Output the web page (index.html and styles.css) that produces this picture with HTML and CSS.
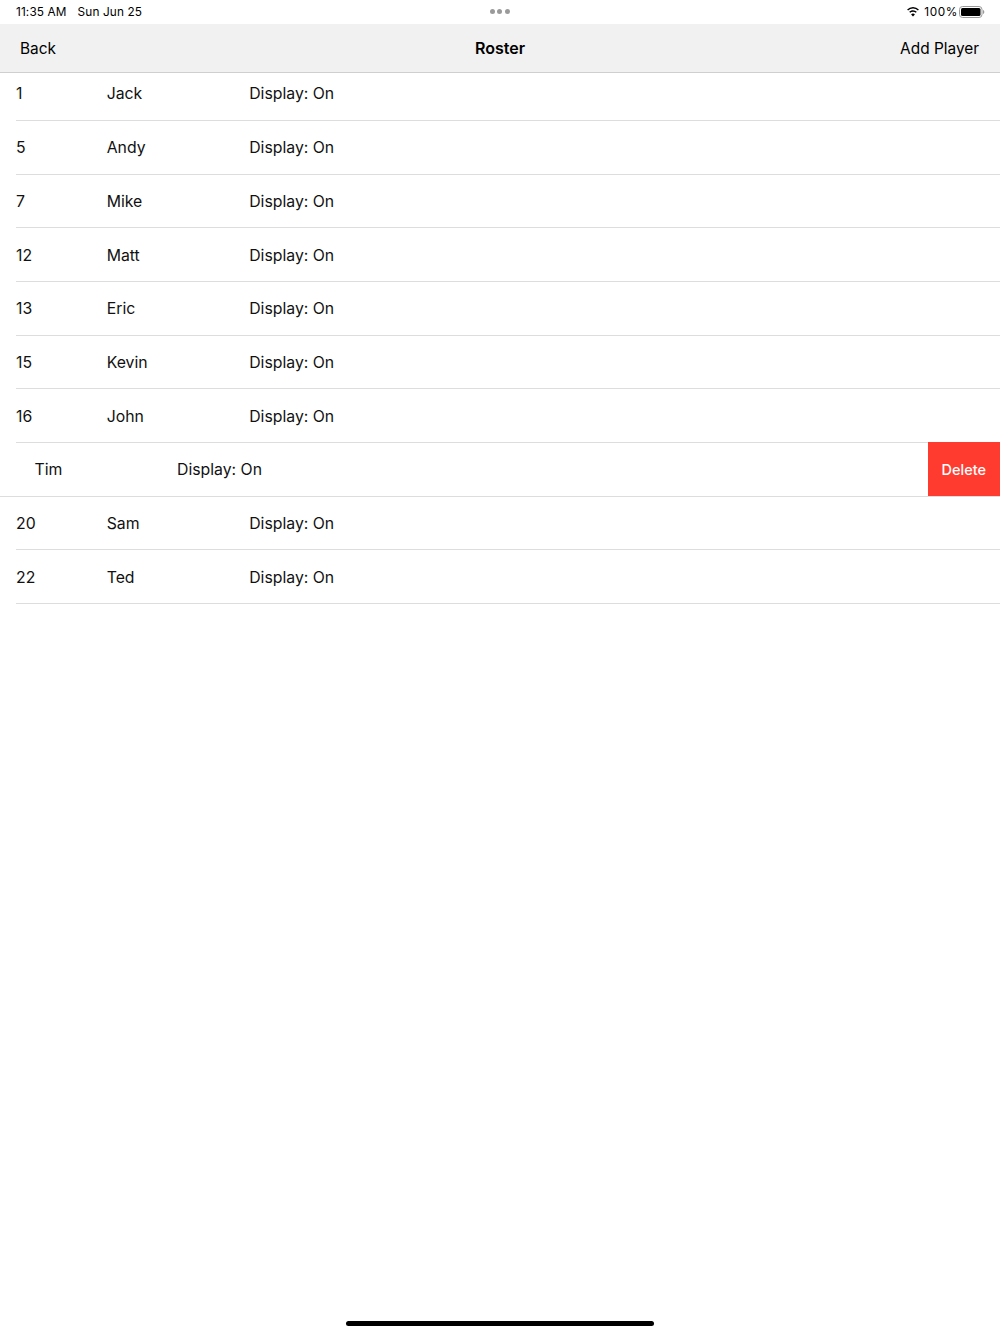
FILE: index.html
```html
<!DOCTYPE html>
<html lang="en">
<head>
<meta charset="utf-8">
<title>Roster</title>
<link rel="stylesheet" href="styles.css">
</head>
<body>
<div class="screen">
  <div class="status">
    <div class="status-left"><span>11:35 AM</span><span>Sun Jun 25</span></div>
    <div class="dots"><i></i><i></i><i></i></div>
    <div class="status-right">
      <svg class="wifi" width="14" height="11" viewBox="0 0 14 11"><path d="M7 2.6c1.9 0 3.6.7 4.9 2l1-1.1A8.4 8.4 0 0 0 7 1 8.4 8.4 0 0 0 1.100 3.500l1 1.100a7 7 0 0 1 4.900-2zM7 5.700c1.100 0 2.100.4 2.800 1.100l1-1.100A5.600 5.600 0 0 0 7 4.200c-1.500 0-2.800.6-3.800 1.500l1 1.100c.7-.7 1.700-1.100 2.800-1.100zM7 10.500l1.900-2.100A2.800 2.800 0 0 0 7 7.600c-.7 0-1.400.3-1.900.8z" fill="#000"/></svg>
      <span class="pct">100%</span>
      <svg class="battery" width="26" height="12" viewBox="0 0 26 12"><rect x="0.500" y="0.500" width="22.500" height="11" rx="3" fill="none" stroke="#999"/><rect x="2" y="2" width="19.500" height="8" rx="1.500" fill="#000"/><path d="M24 4v4c.8-.3 1.300-1.100 1.300-2S24.800 4.300 24 4z" fill="#999"/></svg>
    </div>
  </div>
  <header class="nav">
    <span class="nav-item">Back</span>
    <span class="nav-title">Roster</span>
    <span class="nav-item">Add Player</span>
  </header>
  <main class="list">
    <div class="row row-first"><span class="num">1</span><span class="name">Jack</span><span>Display: On</span></div>
    <div class="row"><span class="num">5</span><span class="name">Andy</span><span>Display: On</span></div>
    <div class="row"><span class="num">7</span><span class="name">Mike</span><span>Display: On</span></div>
    <div class="row"><span class="num">12</span><span class="name">Matt</span><span>Display: On</span></div>
    <div class="row"><span class="num">13</span><span class="name">Eric</span><span>Display: On</span></div>
    <div class="row"><span class="num">15</span><span class="name">Kevin</span><span>Display: On</span></div>
    <div class="row"><span class="num">16</span><span class="name">John</span><span>Display: On</span></div>
    <div class="row row-swiped"><span class="name-swiped">Tim</span><span>Display: On</span><span class="delete">Delete</span></div>
    <div class="row"><span class="num">20</span><span class="name">Sam</span><span>Display: On</span></div>
    <div class="row"><span class="num">22</span><span class="name">Ted</span><span>Display: On</span></div>
  </main>
  <div class="home-area"><div class="home-bar"></div></div>
</div>
</body>
</html>
```
FILE: styles.css
```css
* { box-sizing: border-box; }
html, body { margin: 0; padding: 0; background: #fff; }
body { font-family: Inter, "Liberation Sans", sans-serif; color: #000; }
.screen { width: 1000px; height: 1334px; display: flex; flex-direction: column; overflow: hidden; }
.status { height: 24px; flex: none; display: grid; grid-template-columns: 1fr auto 1fr; align-items: center; padding: 0 15px 1px 16px; font-size: 11.800px; letter-spacing: 0.130px; }
.status-left { display: flex; gap: 11px; }
.dots { display: flex; gap: 2.500px; margin-left: -2px; }
.dots i { width: 5px; height: 5px; border-radius: 50%; background: #9a9a9a; }
.status-right { display: flex; justify-content: flex-end; align-items: center; gap: 4px; }
.wifi { margin-right: 0; }
.pct { letter-spacing: 0.600px; }
.battery { margin-left: -3px; }
.nav { height: 49px; flex: none; background: #f1f1f1; border-bottom: 1px solid #cfcfcf; display: flex; justify-content: space-between; align-items: center; padding: 0 21px 0 20px; font-size: 15.400px; }
.nav-title { font-weight: 600; font-size: 16px; position: absolute; left: 0; right: 0; text-align: center; pointer-events: none; }
.list { flex: none; }
.row { height: 53.670px; margin-left: 16px; padding-top: 1px; display: flex; align-items: center; border-bottom: 1px solid #dddddd; font-size: 15.800px; color: #111; }
.row-first { height: 48px; padding: 0 0 7px; }
.num { width: 90.700px; flex: none; }
.name { width: 142.500px; flex: none; }
.row-swiped { margin-left: 0; padding-left: 34.500px; padding-top: 0; position: relative; }
.name-swiped { width: 142.500px; flex: none; }
.delete { position: absolute; top: -1px; bottom: 0; right: 0; width: 72.500px; padding-top: 1px; background: #ff3b30; color: #fff; font-size: 14.500px; font-weight: 500; display: flex; align-items: center; justify-content: center; }
.home-area { margin-top: auto; height: 13px; flex: none; }
.home-bar { width: 308px; height: 5px; margin: 0 auto; background: #000; border-radius: 3px; }
```
